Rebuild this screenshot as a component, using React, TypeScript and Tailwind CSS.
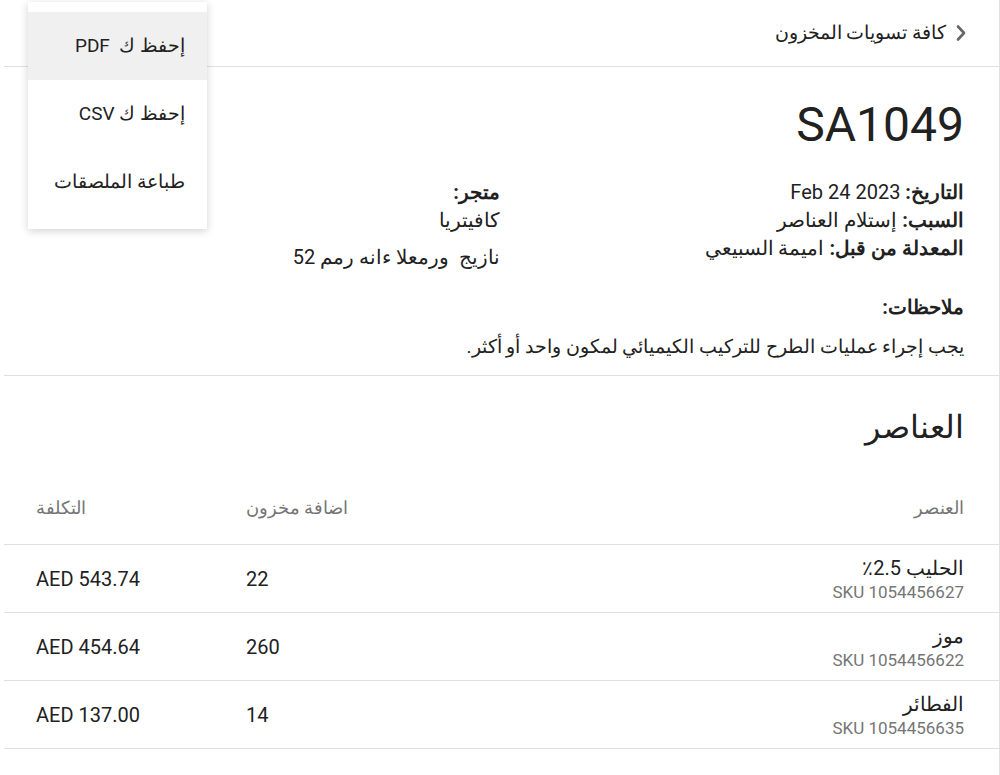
const rows = [
  { name: "الحليب 2.5٪", sku: "SKU 1054456627", qty: "22", cost: "AED 543.74" },
  { name: "موز", sku: "SKU 1054456622", qty: "260", cost: "AED 454.64" },
  { name: "الفطائر", sku: "SKU 1054456635", qty: "14", cost: "AED 137.00" },
];

const menuItems = ["إحفظ ك  PDF", "إحفظ ك CSV", "طباعة الملصقات"];

function ExportMenu() {
  return (
    <div className="absolute left-[28px] top-[2px] z-10 w-[179px] bg-white pt-[10px] pb-[13px] shadow-[0_2px_8px_rgba(0,0,0,0.18)]">
      {menuItems.map((label, i) => (
        <div
          key={label}
          className={`flex h-[68px] items-center pr-[22px] text-[19px] text-[#212121] ${
            i === 0 ? "bg-[#f0f0f0]" : ""
          }`}
        >
          <span className="whitespace-pre">{label}</span>
        </div>
      ))}
    </div>
  );
}

export default function App() {
  return (
    <div
      dir="rtl"
      className="relative min-h-[775px] bg-white font-['Roboto','Noto_Sans',sans-serif] text-[#212121]"
    >
      <ExportMenu />

      <div className="ml-[3px] min-h-[775px] w-[996px] border-r border-[#e0e0e0]">
        {/* breadcrumb */}
        <header className="flex h-[67px] items-center gap-[9px] border-b border-[#e0e0e0] pr-[32px] pl-[32px]">
          <svg width="12" height="18" viewBox="0 0 12 18" className="shrink-0">
            <path
              d="M3 2.5 L9 9 L3 15.5"
              fill="none"
              stroke="#666666"
              strokeWidth="2.6"
              strokeLinecap="round"
              strokeLinejoin="round"
            />
          </svg>
          <span className="text-[19px]">كافة تسويات المخزون</span>
        </header>

        {/* summary */}
        <section className="border-b border-[#e0e0e0] pt-[30px] pr-[35px] pl-[32px] pb-[14px]">
          <h1 className="text-[48px] leading-[56px]">SA1049</h1>

          <div className="mt-[25px] grid grid-cols-2 text-[20px]">
            <div className="leading-[28px]">
              <div>
                <span className="font-bold">التاريخ:</span> Feb 24 2023
              </div>
              <div>
                <span className="font-bold">السبب:</span> إستلام العناصر
              </div>
              <div>
                <span className="font-bold">المعدلة من قبل:</span> اميمة السبيعي
              </div>
            </div>
            <div className="leading-[28px]">
              <div className="font-bold">متجر:</div>
              <div>كافيتريا</div>
              <div className="mt-[9px] whitespace-pre">نازيج  ورمعلا ءانه رمم 52</div>
            </div>
          </div>

          <div className="mt-[22px] leading-[28px]">
            <div className="text-[20px] font-bold">ملاحظات:</div>
            <p className="mt-[12px] text-[19px]">
              يجب إجراء عمليات الطرح للتركيب الكيميائي لمكون واحد أو أكثر.
            </p>
          </div>
        </section>

        {/* items */}
        <section>
          <h2 className="pt-[31px] pr-[35px] text-[32px] leading-[40px]">العناصر</h2>

          <div className="mt-[24px] flex h-[74px] items-center border-b border-[#e0e0e0] pr-[35px] pl-[32px] text-[18px] text-[#757575]">
            <div className="flex-1">العنصر</div>
            <div className="w-[200px] text-left">اضافة مخزون</div>
            <div className="w-[210px] text-left">التكلفة</div>
          </div>

          {rows.map((r) => (
            <div
              key={r.sku}
              className="flex h-[68px] items-center border-b border-[#e0e0e0] pr-[35px] pl-[32px] text-[20px]"
            >
              <div className="flex-1">
                <div className="leading-[26px]">{r.name}</div>
                <div className="text-[17px] leading-[22px] text-[#757575]">{r.sku}</div>
              </div>
              <div className="w-[200px] text-left">{r.qty}</div>
              <div className="w-[210px] text-left">{r.cost}</div>
            </div>
          ))}
        </section>
      </div>
    </div>
  );
}
